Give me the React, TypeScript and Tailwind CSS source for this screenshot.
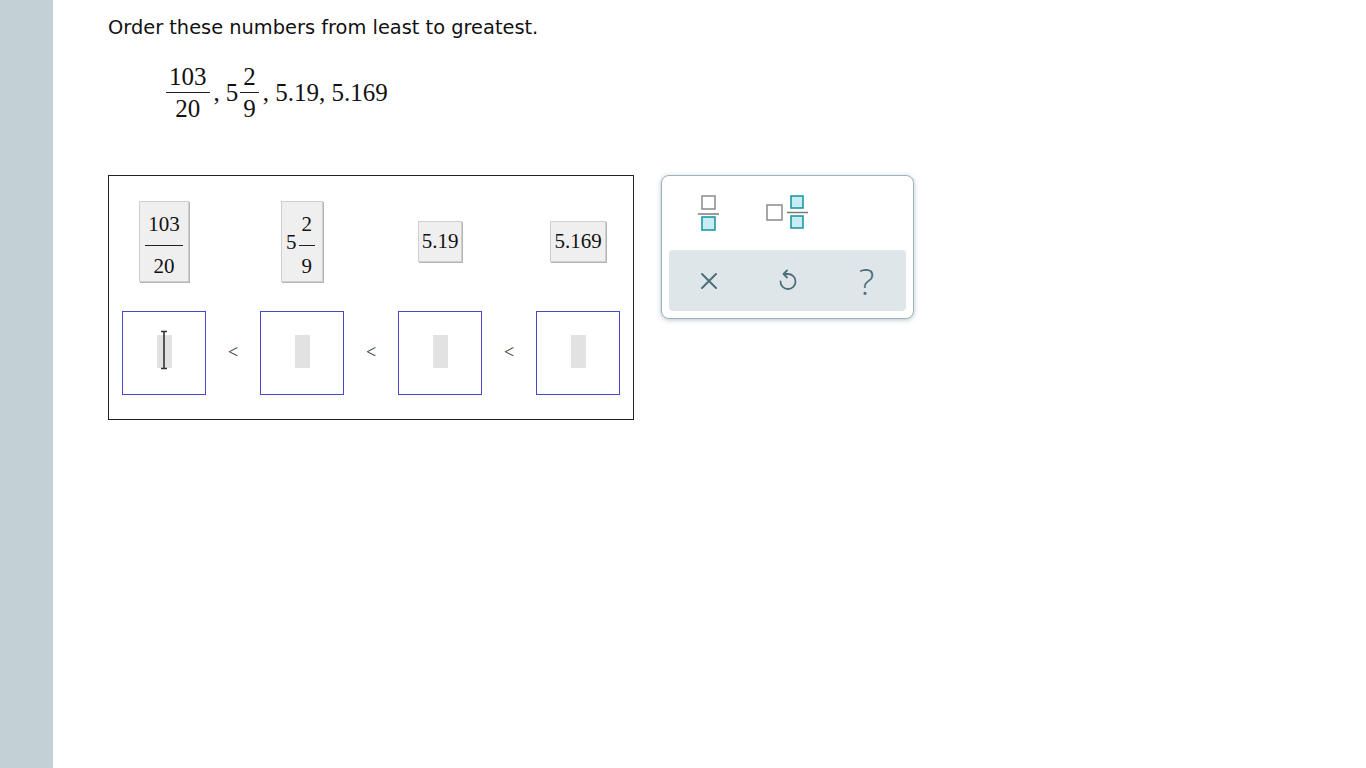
import React from 'react'

const serif = { fontFamily: '"Liberation Serif", "Times New Roman", serif' }

function Frac({ num, den, size = 'inline' }: { num: string; den: string; size?: 'inline' | 'tile' }) {
  if (size === 'tile') {
    return (
      <span className="inline-flex flex-col items-stretch">
        <span className="px-[3px] pt-[10px] pb-[9px] text-center text-[21px] leading-[24px]">{num}</span>
        <span className="h-px bg-[#222]" />
        <span className="px-[3px] pt-[8px] pb-[3px] text-center text-[21px] leading-[24px]">{den}</span>
      </span>
    )
  }
  return (
    <span className="inline-flex flex-col items-stretch">
      <span className="px-[3px] pb-[2px] text-center text-[25px] leading-[26px]">{num}</span>
      <span className="h-px bg-[#222]" />
      <span className="px-[3px] pt-[3px] text-center text-[25px] leading-[26px]">{den}</span>
    </span>
  )
}

function Tile({ children }: { children: React.ReactNode }) {
  return (
    <div className="flex items-center border border-[#cfcfcf] bg-[#efefef] text-[#111] shadow-[1px_1px_0_#b5b5b5]" style={serif}>
      {children}
    </div>
  )
}

function Slot({ cursor }: { cursor?: boolean }) {
  return (
    <div className="relative flex h-[84px] w-[84px] items-center justify-center border border-[#4848cc] bg-white">
      <div className="mb-[4px] h-[33px] w-[15px] bg-[#e2e2e2]" />
      {cursor && (
        <svg className="absolute left-[36px] top-[18px]" width="10" height="40" viewBox="0 0 10 40">
          <path d="M2 1.5 H8 M5 1.5 V38.5 M2 38.5 H8" stroke="#333" strokeWidth="1.6" fill="none" />
        </svg>
      )}
    </div>
  )
}

function FracIcon() {
  return (
    <svg width="24" height="38" viewBox="0 0 24 38">
      <rect x="5" y="1" width="13" height="13" fill="none" stroke="#8a8a8a" strokeWidth="1.5" />
      <line x1="1" y1="19" x2="22" y2="19" stroke="#7a7a7a" strokeWidth="1.5" />
      <rect x="5" y="22" width="13" height="13" fill="#c8ecf1" stroke="#1f9aa5" strokeWidth="1.6" />
    </svg>
  )
}

function MixedIcon() {
  return (
    <svg width="44" height="38" viewBox="0 0 44 38">
      <rect x="1" y="10" width="15" height="15" fill="none" stroke="#8a8a8a" strokeWidth="1.5" />
      <line x1="21" y1="17.5" x2="42" y2="17.5" stroke="#7a7a7a" strokeWidth="1.5" />
      <rect x="25" y="1" width="12" height="12" fill="#c8ecf1" stroke="#1f9aa5" strokeWidth="1.6" />
      <rect x="25" y="21" width="12" height="12" fill="#c8ecf1" stroke="#1f9aa5" strokeWidth="1.6" />
    </svg>
  )
}

export default function App() {
  const lt = <div className="flex w-[54px] justify-center pb-[2px] text-[18px] text-[#333]" style={serif}>&lt;</div>

  return (
    <div className="flex min-h-screen bg-white">
      <div className="w-[53px] shrink-0 bg-[#c3d0d5]" />
      <main className="pl-[55px] pt-[14px]">
        <p className="text-[19.4px] leading-[28px] text-[#111]" style={{ fontFamily: '"DejaVu Sans", Verdana, sans-serif' }}>
          Order these numbers from least to greatest.
        </p>

        <div className="ml-[58px] mt-[22px] flex items-center text-[25px] leading-[26px] text-[#111]" style={serif}>
          <Frac num="103" den="20" />
          <span className="ml-[4px] mr-[6px]">,</span>
          <span className="mr-[2px]">5</span>
          <Frac num="2" den="9" />
          <span className="ml-[4px]">,&nbsp;5.19, 5.169</span>
        </div>

        <div className="mt-[53px] flex items-start gap-[27px]">
          <div className="w-[526px] border border-[#222] px-[13px] pt-[25px] pb-[24px]">
            <div className="flex h-[81px] items-center">
              <div className="flex w-[84px] justify-center">
                <Tile>
                  <span className="px-[5px]">
                    <Frac num="103" den="20" size="tile" />
                  </span>
                </Tile>
              </div>
              <div className="w-[54px]" />
              <div className="flex w-[84px] justify-center">
                <Tile>
                  <span className="flex items-center pr-[6px] pl-[4px]">
                    <span className="mr-[1px] text-[21px] leading-[24px]">5</span>
                    <span className="px-[1px]">
                      <Frac num="2" den="9" size="tile" />
                    </span>
                  </span>
                </Tile>
              </div>
              <div className="w-[54px]" />
              <div className="flex w-[84px] justify-center">
                <Tile>
                  <span className="px-[3px] text-[21px] leading-[39px]">5.19</span>
                </Tile>
              </div>
              <div className="w-[54px]" />
              <div className="flex w-[84px] justify-center">
                <Tile>
                  <span className="px-[3px] text-[21px] leading-[39px]">5.169</span>
                </Tile>
              </div>
            </div>

            <div className="mt-[29px] flex items-center">
              <Slot cursor />
              {lt}
              <Slot />
              {lt}
              <Slot />
              {lt}
              <Slot />
            </div>
          </div>

          <div className="w-[253px] rounded-[8px] border border-[#9db2bb] bg-white px-[7px] pb-[7px] shadow-[0_1px_5px_rgba(80,110,125,0.4)]">
            <div className="flex h-[74px] items-center">
              <div className="flex w-[79px] justify-center pt-[1px]">
                <FracIcon />
              </div>
              <div className="flex w-[79px] justify-center pt-[1px]">
                <MixedIcon />
              </div>
            </div>
            <div className="flex h-[61px] items-center rounded-[4px] bg-[#dfe6e9]">
              <div className="flex w-[79px] justify-center">
                <svg width="20" height="20" viewBox="0 0 20 20">
                  <path d="M3 3 L17 17 M17 3 L3 17" stroke="#4e6e7b" strokeWidth="2" strokeLinecap="round" />
                </svg>
              </div>
              <div className="flex w-[79px] justify-center">
                <svg width="22" height="24" viewBox="0 0 22 24">
                  <path d="M7 5 H11 A7.5 7.5 0 1 1 3.5 12.5" fill="none" stroke="#4e6e7b" strokeWidth="1.8" strokeLinecap="round" />
                  <path d="M10 1.5 L6.5 5 L10 8.5" fill="none" stroke="#4e6e7b" strokeWidth="1.8" strokeLinecap="round" strokeLinejoin="round" />
                </svg>
              </div>
              <div className="flex w-[79px] justify-center">
                <span className="text-[37px] font-light leading-[36px] text-[#4e6e7b]" style={{ fontFamily: '"Open Sans", Lato, sans-serif' }}>
                  ?
                </span>
              </div>
            </div>
          </div>
        </div>
      </main>
    </div>
  )
}
